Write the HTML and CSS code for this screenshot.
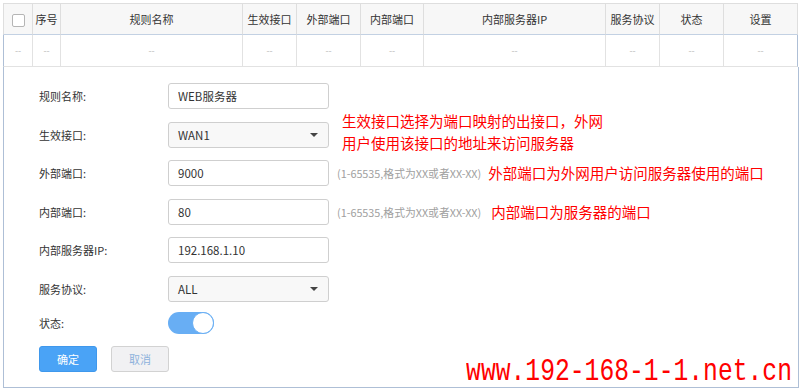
FILE: index.html
```html
<!DOCTYPE HTML>
<html>

<head>
    <meta charset="utf-8">

    <link rel="stylesheet" href="styles.css">

</head>

<body>

<div class="page">

    <table class="rule-table">
        <tr>
            <th class="c-check"><span class="checkbox"></span></th>
            <th class="c-no">序号</th>
            <th class="c-name">规则名称</th>
            <th class="c-if">生效接口</th>
            <th class="c-ext">外部端口</th>
            <th class="c-int">内部端口</th>
            <th class="c-ip">内部服务器IP</th>
            <th class="c-proto">服务协议</th>
            <th class="c-state">状态</th>
            <th class="c-set">设置</th>
        </tr>
        <tr>
            <td>--</td>
            <td>--</td>
            <td>--</td>
            <td>--</td>
            <td>--</td>
            <td>--</td>
            <td>--</td>
            <td>--</td>
            <td>--</td>
            <td>--</td>
        </tr>
    </table>

    <div class="edit-panel">

        <div class="form-row">
            <label class="form-label">规则名称:</label>
            <input class="field" type="text" value="WEB服务器">
        </div>

        <div class="form-row">
            <label class="form-label">生效接口:</label>
            <div class="field select"><span>WAN1</span><span class="arrow"></span></div>
            <div class="note note-two">生效接口选择为端口映射的出接口，外网<br>用户使用该接口的地址来访问服务器</div>
        </div>

        <div class="form-row">
            <label class="form-label">外部端口:</label>
            <input class="field" type="text" value="9000">
            <span class="hint">(1-65535,格式为XX或者XX-XX)</span>
            <span class="note">外部端口为外网用户访问服务器使用的端口</span>
        </div>

        <div class="form-row">
            <label class="form-label">内部端口:</label>
            <input class="field" type="text" value="80">
            <span class="hint">(1-65535,格式为XX或者XX-XX)</span>
            <span class="note note-far">内部端口为服务器的端口</span>
        </div>

        <div class="form-row">
            <label class="form-label">内部服务器IP:</label>
            <input class="field" type="text" value="192.168.1.10">
        </div>

        <div class="form-row">
            <label class="form-label">服务协议:</label>
            <div class="field select"><span>ALL</span><span class="arrow"></span></div>
        </div>

        <div class="form-row state-row">
            <label class="form-label">状态:</label>
            <span class="switch on"><span class="knob"></span></span>
        </div>

        <div class="buttons">
            <button class="btn btn-ok">确定</button>
            <button class="btn btn-cancel">取消</button>
        </div>

    </div>

    <div class="watermark">www.192-168-1-1.net.cn</div>

</div>

</body>

</html>
```

FILE: styles.css
```css
/* общие стили */

body {
    margin: 0;
    background: #fff;
    font-family: "Noto Sans CJK SC", "Noto Sans", sans-serif;
    font-size: 11px;
    color: #333;
}

.page {
    position: relative;
    width: 795px;
    height: 391px;
    padding: 3px 0 0 3px;
    box-sizing: content-box;
}

/* таблица правил */

.rule-table {
    width: 795px;
    border-collapse: separate;
    border-spacing: 0;
    table-layout: fixed;
}

.rule-table th {
    height: 30px;
    padding: 0;
    background: #f7f7f7;
    font-weight: normal;
    text-align: center;
    border-top: 1px solid #dedede;
    border-right: 1px solid #dedede;
    border-bottom: 1px solid #c3d1e3;
}

.rule-table th:first-child {
    border-left: 1px solid #dedede;
}

.rule-table td {
    height: 31px;
    padding: 0;
    text-align: center;
    color: #bbb;
    font-size: 9px;
    border-right: 1px solid #e2e2e2;
    border-bottom: 1px solid #e2e2e2;
}

.rule-table td:first-child {
    border-left: 1px solid #aebfd6;
}

.rule-table td:last-child {
    border-right: 1px solid #aebfd6;
}

.c-check { width: 28px; }
.c-no { width: 27px; }
.c-name { width: 181px; }
.c-if { width: 53px; }
.c-ext { width: 63px; }
.c-int { width: 62px; }
.c-ip { width: 181px; }
.c-proto { width: 53px; }
.c-state { width: 63px; }
.c-set { width: 73px; }

.checkbox {
    display: inline-block;
    width: 11px;
    height: 11px;
    border: 1px solid #b5b5b5;
    border-radius: 2px;
    background: #fff;
    vertical-align: middle;
}

/* форма редактирования */

.edit-panel {
    width: 759px;
    padding: 16px 0 15px 35px;
    border-left: 1px solid #aebfd6;
    border-right: 1px solid #aebfd6;
    border-bottom: 1px solid #aebfd6;
}

.form-row {
    display: flex;
    align-items: center;
    height: 26px;
    margin-bottom: 12.5px;
}

.form-label {
    width: 129px;
    flex: none;
}

.field {
    box-sizing: border-box;
    width: 161px;
    height: 26px;
    flex: none;
    padding: 0 9px;
    border: 1px solid #cfcfcf;
    border-radius: 3px;
    background: #fff;
    font-family: "Noto Sans CJK SC", "Noto Sans", sans-serif;
    font-size: 11.5px;
    color: #333;
    outline: none;
}

.select {
    display: flex;
    align-items: center;
    justify-content: space-between;
    background: #f8f8f8;
}

.arrow {
    width: 0;
    height: 0;
    border-left: 4px solid transparent;
    border-right: 4px solid transparent;
    border-top: 4px solid #444;
    margin-right: 1px;
}

.hint {
    margin-left: 8px;
    font-size: 10.8px;
    color: #a0a0a0;
    white-space: nowrap;
}

.note {
    margin-left: 7px;
    font-size: 14.5px;
    line-height: 22px;
    color: #f00;
    white-space: nowrap;
}

.note-far {
    margin-left: 10px;
}

.note-two {
    margin-left: 13px;
    margin-top: -5px;
}

.state-row {
    height: 22px;
    margin-top: -2px;
    margin-bottom: 12px;
}

.switch {
    position: relative;
    display: inline-block;
    width: 46px;
    height: 22px;
    border-radius: 11px;
    background: #68aef4;
}

.knob {
    position: absolute;
    top: 0;
    right: 0;
    width: 20px;
    height: 20px;
    border-radius: 50%;
    border: 1px solid #68aef4;
    background: #fff;
}

.buttons {
    display: flex;
    gap: 14px;
}

.btn {
    width: 58px;
    height: 26px;
    padding: 0;
    border-radius: 3px;
    font-family: "Noto Sans CJK SC", "Noto Sans", sans-serif;
    font-size: 11px;
}

.btn-ok {
    background: #4aa3f6;
    border: 1px solid #3f98ec;
    color: #fff;
}

.btn-cancel {
    background: #f1f1f3;
    border: 1px solid #d2d2d2;
    color: #8eb2dc;
}

/* водяной знак */

.watermark {
    position: absolute;
    right: 6px;
    bottom: 7px;
    font-family: "Liberation Mono", monospace;
    font-size: 24.7px;
    line-height: 24px;
    color: #f00;
    transform: scaleY(1.3);
    transform-origin: bottom;
}
```
